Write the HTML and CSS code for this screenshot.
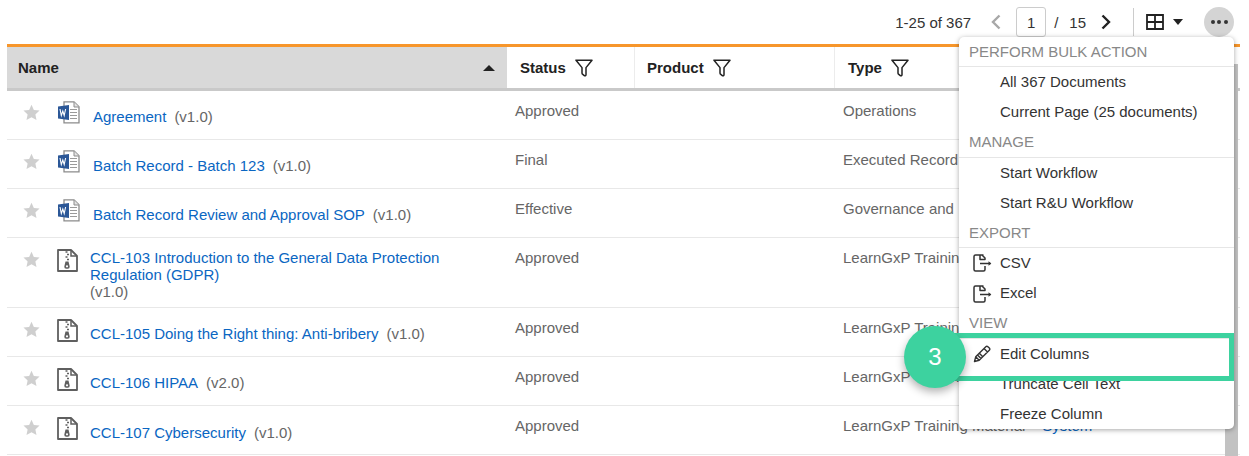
FILE: index.html
```html
<!DOCTYPE html>
<html lang="en">
<head>
<meta charset="utf-8">
<title>Documents</title>
<link rel="stylesheet" href="styles.css">
</head>
<body>
<svg class="defs" width="0" height="0" aria-hidden="true">
  <defs>
    <symbol id="filter" viewBox="0 0 18 18"><path d="M1 1.200h16l-6 7.400v7.200c0 .9-1 1.300-1.700.8l-1.500-1.200c-.5-.4-.8-.9-.8-1.500V8.600z" fill="none" stroke="currentColor" stroke-width="1.500" stroke-linejoin="round"/></symbol>
    <symbol id="star" viewBox="0 0 18 18"><path d="M9 .8l2.500 5.500 6 .7-4.400 4 1.200 5.900L9 14l-5.300 2.900 1.200-5.900-4.400-4 6-.7z" fill="#cfcfcf"/></symbol>
    <symbol id="word" viewBox="0 0 23 23"><path d="M7 .8h10l5 5v16H7z" fill="#fff" stroke="#8c8c8c" stroke-width="1.300"/><path d="M17 1v5h5" fill="#e3e3e3" stroke="#8c8c8c"/><path d="M13 8.500h7M13 11.500h7M13 14.500h7M13 17.500h7" stroke="#9a9a9a" stroke-width="1.200"/><path d="M1 5.500l11-1.500v15L1 17.500z" fill="#2b5797"/><path d="M3 8l1.300 6.500L5.800 10l1.400 4.500L8.600 8" fill="none" stroke="#fff" stroke-width="1.100"/></symbol>
    <symbol id="zip" viewBox="0 0 21 23"><path d="M1 1h13l6 6v15H1z" fill="#fff" stroke="#5f5f5f" stroke-width="1.800" stroke-linejoin="round"/><path d="M14 1v6h6" fill="none" stroke="#5f5f5f" stroke-width="1.500"/><path d="M8.500 3h2M10 5.500h2M8.500 8h2M10 10.500h2" stroke="#5f5f5f" stroke-width="1.300"/><path d="M8.500 12.500h3l1.200 5a2 2 0 0 1-2 2.200h-1.400a2 2 0 0 1-2-2.200z" fill="#5f5f5f"/><circle cx="10" cy="17.300" r="1.100" fill="#fff"/></symbol>
    <symbol id="export" viewBox="0 0 20 18"><path d="M11.500 1H3.500a1.500 1.500 0 0 0-1.500 1.500v13A1.500 1.500 0 0 0 3.500 17h8a1.500 1.500 0 0 0 1.500-1.500V12M8 1v4.500h5V4L10 1" fill="none" stroke="#333" stroke-width="1.500" stroke-linejoin="round"/><path d="M8 9.500h10.500" stroke="#333" stroke-width="1.500"/><path d="M16.500 7.300l2.800 2.200-2.800 2.200z" fill="#333"/></symbol>
  </defs>
</svg>

<header class="toolbar">
  <span class="range">1-25 of 367</span>
  <svg class="chev" viewBox="0 0 12 16" aria-hidden="true"><path d="M9.500 1.500L3 8l6.500 6.500" fill="none" stroke="#a8a8a8" stroke-width="2.400"/></svg>
  <span class="page-box">1</span>
  <span class="slash">/</span>
  <span class="pages">15</span>
  <svg class="chev next" viewBox="0 0 12 16" aria-hidden="true"><path d="M2.500 1.500L9 8l-6.500 6.500" fill="none" stroke="#222" stroke-width="2.400"/></svg>
  <span class="divider"></span>
  <svg class="grid-icon" viewBox="0 0 18 16" aria-hidden="true"><path d="M1 1h16v14H1zM1 8h16M9 1v14" fill="none" stroke="#222" stroke-width="1.800"/></svg>
  <span class="caret"></span>
  <span class="more"><i></i><i></i><i></i></span>
</header>

<main class="table">
  <div class="row head">
    <div class="cell name-h"><span>Name</span><span class="sort"></span></div>
    <div class="cell h"><span>Status</span><svg class="filter"><use href="#filter"/></svg></div>
    <div class="cell h tight"><span>Product</span><svg class="filter"><use href="#filter"/></svg></div>
    <div class="cell h last"><span>Type</span><svg class="filter"><use href="#filter"/></svg></div>
  </div>

  <div class="row r49">
    <div class="cell name word-row"><svg class="star"><use href="#star"/></svg><svg class="doc"><use href="#word"/></svg><p><a>Agreement</a><span class="ver">(v1.0)</span></p></div>
    <div class="cell val">Approved</div><div class="cell val"></div>
    <div class="cell val type">Operations</div>
  </div>
  <div class="row r49">
    <div class="cell name word-row"><svg class="star"><use href="#star"/></svg><svg class="doc"><use href="#word"/></svg><p><a>Batch Record - Batch 123</a><span class="ver">(v1.0)</span></p></div>
    <div class="cell val">Final</div><div class="cell val"></div>
    <div class="cell val type">Executed Record</div>
  </div>
  <div class="row r49">
    <div class="cell name word-row"><svg class="star"><use href="#star"/></svg><svg class="doc"><use href="#word"/></svg><p><a>Batch Record Review and Approval SOP</a><span class="ver">(v1.0)</span></p></div>
    <div class="cell val">Effective</div><div class="cell val"></div>
    <div class="cell val type">Governance and</div>
  </div>
  <div class="row r70">
    <div class="cell name zip-row"><svg class="star"><use href="#star"/></svg><svg class="doc zip"><use href="#zip"/></svg><p class="wrap"><a>CCL-103 Introduction to the General Data Protection Regulation (GDPR)</a><br><span class="ver none">(v1.0)</span></p></div>
    <div class="cell val">Approved</div><div class="cell val"></div>
    <div class="cell val type">LearnGxP Training Material</div>
  </div>
  <div class="row r49">
    <div class="cell name zip-row"><svg class="star"><use href="#star"/></svg><svg class="doc zip"><use href="#zip"/></svg><p><a>CCL-105 Doing the Right thing: Anti-bribery</a><span class="ver">(v1.0)</span></p></div>
    <div class="cell val">Approved</div><div class="cell val"></div>
    <div class="cell val type">LearnGxP Training Material</div>
  </div>
  <div class="row r49">
    <div class="cell name zip-row"><svg class="star"><use href="#star"/></svg><svg class="doc zip"><use href="#zip"/></svg><p><a>CCL-106 HIPAA</a><span class="ver">(v2.0)</span></p></div>
    <div class="cell val">Approved</div><div class="cell val"></div>
    <div class="cell val type">LearnGxP Training Material</div>
  </div>
  <div class="row r49">
    <div class="cell name zip-row"><svg class="star"><use href="#star"/></svg><svg class="doc zip"><use href="#zip"/></svg><p class="low"><a>CCL-107 Cybersecurity</a><span class="ver">(v1.0)</span></p></div>
    <div class="cell val">Approved</div><div class="cell val"></div>
    <div class="cell val type">LearnGxP Training Material<a class="sys">System</a></div>
  </div>
</main>

<div class="scrollbar"></div>

<nav class="menu">
  <h6>PERFORM BULK ACTION</h6>
  <div class="item">All 367 Documents</div>
  <div class="item">Current Page (25 documents)</div>
  <h6>MANAGE</h6>
  <div class="item">Start Workflow</div>
  <div class="item">Start R&amp;U Workflow</div>
  <h6>EXPORT</h6>
  <div class="item"><svg class="mi"><use href="#export"/></svg>CSV</div>
  <div class="item"><svg class="mi"><use href="#export"/></svg>Excel</div>
  <h6>VIEW</h6>
  <div class="item"><svg class="mi pencil" viewBox="0 0 18 18" aria-hidden="true"><path d="M1.500 16.500l1.200-4.700L12.800 1.700a1.500 1.500 0 0 1 2.100 0l1.400 1.400a1.500 1.500 0 0 1 0 2.100L6.200 15.300zM2.700 11.800l3.500 3.500M4.500 10l3.500 3.500M6.300 8.200l3.500 3.500M11 3.500l3.500 3.500" fill="none" stroke="#333" stroke-width="1.400" stroke-linejoin="round"/></svg>Edit Columns</div>
  <div class="item">Truncate Cell Text</div>
  <div class="item">Freeze Column</div>
</nav>

<div class="highlight"></div>
<div class="step">3</div>
</body>
</html>
```

FILE: styles.css
```css
* { box-sizing: border-box; }
html, body { margin: 0; padding: 0; }
body {
  width: 1249px;
  height: 456px;
  overflow: hidden;
  position: relative;
  background: #fff;
  font-family: "Liberation Sans", Arial, sans-serif;
  font-size: 15px;
  color: #555;
}
.defs { position: absolute; }

.toolbar {
  height: 44px;
  padding-right: 15px;
  display: flex;
  align-items: center;
  justify-content: flex-end;
  color: #333;
}
.range { margin-right: 19px; }
.chev { width: 12px; height: 16px; margin-right: 14px; }
.chev.next { margin: 0 0 0 14px; }
.page-box {
  width: 30px;
  height: 30px;
  margin-right: 8px;
  border: 1px solid #ccc;
  border-radius: 3px;
  display: flex;
  align-items: center;
  justify-content: center;
}
.slash { margin-right: 11px; }
.divider { width: 1px; height: 28px; background: #ccc; margin: 0 12px 0 21px; }
.grid-icon { width: 18px; height: 16px; margin-right: 9px; }
.caret {
  width: 0;
  height: 0;
  border-left: 5px solid transparent;
  border-right: 5px solid transparent;
  border-top: 6px solid #222;
  margin-right: 21px;
}
.more {
  width: 30px;
  height: 30px;
  border-radius: 50%;
  background: #d4d4d4;
  display: flex;
  align-items: center;
  justify-content: center;
  gap: 2.500px;
}
.more i { width: 4px; height: 4px; border-radius: 50%; background: #333; }

.table {
  margin-left: 7px;
  width: 1233px;
  border-top: 3px solid #f7962b;
}
.row {
  display: grid;
  grid-template-columns: 500px 128px 200px 1fr;
  border-bottom: 1px solid #e8e8e8;
}
.r49 { height: 49px; }
.r70 { height: 70px; }
.head {
  height: 44px;
  border-bottom: 3px solid #c9c9c9;
  font-weight: 700;
  color: #222;
}
.head .cell { display: flex; align-items: center; }
.name-h {
  background: #d9d9d9;
  padding: 0 12px 0 11px;
  justify-content: space-between;
}
.sort {
  width: 0;
  height: 0;
  border-left: 6px solid transparent;
  border-right: 6px solid transparent;
  border-bottom: 6px solid #222;
}
.h { padding: 0 0 0 13px; gap: 9px; border-right: 1px solid #ececec; }
.h.tight { padding-left: 12px; }
.h.last { border-right: 0; }
.filter { width: 18px; height: 18px; color: #222; }

.name { display: flex; align-items: flex-start; padding-left: 16px; }
.star { width: 17px; height: 17px; margin-top: 13px; flex: none; }
.doc { width: 23px; height: 23px; margin: 10px 0 0 17px; flex: none; }
.doc.zip { width: 21px; margin: 11px 0 0 17px; }
.name p { margin: 0; line-height: 17px; }
.word-row p { margin: 17px 0 0 13px; }
.zip-row p { margin: 17px 0 0 12px; }
.zip-row p.low { margin-top: 18px; }
.name p.wrap { width: 370px; margin-top: 11px; }
.name a, .sys { color: #0a66c2; }
.ver { margin-left: 8px; color: #666; }
.ver.none { margin-left: 0; }
.val { padding: 11px 0 0 8px; line-height: 17px; color: #666; }
.type { white-space: nowrap; }
.sys { margin-left: 17px; }

.scrollbar {
  position: absolute;
  left: 1225px;
  top: 64px;
  width: 13px;
  height: 392px;
  background: #c2c2c2;
}

.menu {
  position: absolute;
  left: 959px;
  top: 37px;
  width: 275px;
  height: 392px;
  background: #fff;
  border-radius: 5px;
  box-shadow: 0 1px 5px rgba(0, 0, 0, .35);
  color: #333;
}
.menu h6 {
  margin: 0;
  height: 30.200px;
  padding: 5.700px 0 0 10px;
  font-size: 15px;
  font-weight: 400;
  line-height: 17px;
  color: #888;
  border-bottom: 1px solid #e6e6e6;
}
.item {
  height: 30.200px;
  padding: 0 0 1.400px 41px;
  display: flex;
  align-items: center;
  position: relative;
}
.mi {
  position: absolute;
  left: 13px;
  top: 6px;
  width: 20px;
  height: 18px;
}
.pencil { left: 14px; width: 18px; }

.highlight {
  position: absolute;
  left: 945px;
  top: 333px;
  width: 289px;
  height: 48px;
  border: 5px solid #3dd29f;
}
.step {
  position: absolute;
  left: 904px;
  top: 326px;
  width: 62px;
  height: 62px;
  border-radius: 50%;
  background: #3dd29f;
  color: #fff;
  font-size: 24px;
  display: flex;
  align-items: center;
  justify-content: center;
  box-shadow: 0 4px 8px rgba(0, 0, 0, .3);
}
```
